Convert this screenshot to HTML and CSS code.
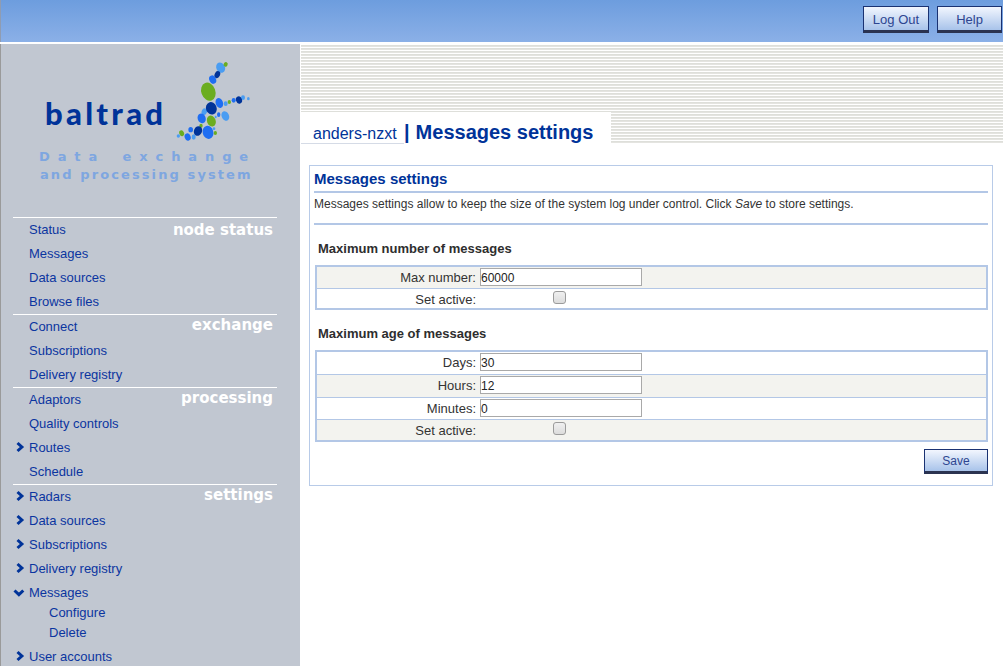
FILE: index.html
```html
<!DOCTYPE html>
<html lang="en">
<head>
<meta charset="utf-8">
<title>Messages settings</title>
<link rel="stylesheet" href="styles.css">
</head>
<body>
<header class="topbar">
  <button class="btn btn-wide" type="button">Log Out</button>
  <button class="btn" type="button">Help</button>
</header>
<div class="page">
  <aside class="sidebar">
    <div class="logo">
      <div class="logo-top">
        <span class="logo-word">baltrad</span>
        <svg class="logo-mark" width="90" height="90" viewBox="0 0 270 270" aria-hidden="true">
          <g class="dot-light">
            <ellipse cx="152" cy="38" rx="13" ry="16" transform="rotate(-25 152 38)"/>
            <ellipse cx="167" cy="146" rx="6" ry="7"/>
            <ellipse cx="219" cy="128" rx="6" ry="7"/>
            <ellipse cx="235" cy="131" rx="4" ry="5"/>
            <ellipse cx="103" cy="170" rx="8" ry="10" transform="rotate(25 103 170)"/>
            <ellipse cx="166" cy="183" rx="11" ry="15" transform="rotate(-25 166 183)"/>
            <ellipse cx="137" cy="186" rx="3" ry="4"/>
            <ellipse cx="132" cy="221" rx="4" ry="4"/>
            <ellipse cx="71" cy="246" rx="6" ry="8"/>
            <ellipse cx="25" cy="243" rx="5" ry="5"/>
          </g>
          <g class="dot-green">
            <ellipse cx="167" cy="28" rx="6" ry="7" transform="rotate(25 167 28)"/>
            <ellipse cx="115" cy="110" rx="21" ry="28" transform="rotate(-20 115 110)"/>
            <ellipse cx="178" cy="141" rx="5" ry="6"/>
            <ellipse cx="124" cy="198" rx="13" ry="17" transform="rotate(-20 124 198)"/>
            <ellipse cx="93" cy="212" rx="5" ry="6"/>
            <ellipse cx="136" cy="234" rx="5" ry="6"/>
            <ellipse cx="35" cy="235" rx="7" ry="9" transform="rotate(-25 35 235)"/>
          </g>
          <g class="dot-navy">
            <ellipse cx="142" cy="59" rx="8" ry="11" transform="rotate(25 142 59)"/>
            <ellipse cx="207" cy="135" rx="9" ry="11" transform="rotate(-20 207 135)"/>
            <ellipse cx="124" cy="160" rx="16" ry="19" transform="rotate(-20 124 160)"/>
            <ellipse cx="84" cy="228" rx="12" ry="15" transform="rotate(25 84 228)"/>
          </g>
          <g class="dot-blue">
            <ellipse cx="128" cy="74" rx="10" ry="13" transform="rotate(-25 128 74)"/>
            <ellipse cx="148" cy="144" rx="11" ry="15" transform="rotate(-20 148 144)"/>
            <ellipse cx="191" cy="136" rx="6" ry="7"/>
            <ellipse cx="95" cy="190" rx="12" ry="15" transform="rotate(-20 95 190)"/>
            <ellipse cx="146" cy="179" rx="5" ry="7"/>
            <ellipse cx="114" cy="232" rx="16" ry="20" transform="rotate(-15 114 232)"/>
            <ellipse cx="62" cy="224" rx="7" ry="8"/>
            <ellipse cx="53" cy="246" rx="9" ry="11" transform="rotate(-20 53 246)"/>
          </g>
        </svg>
      </div>
      <div class="logo-tag logo-tag-wide">Data exchange</div>
      <div class="logo-tag">and processing system</div>
    </div>

    <nav class="nav">
      <section class="nav-group">
        <h2 class="nav-label nav-label-first">node status</h2>
        <a class="nav-item" href="#">Status</a>
        <a class="nav-item" href="#">Messages</a>
        <a class="nav-item" href="#">Data sources</a>
        <a class="nav-item" href="#">Browse files</a>
      </section>
      <section class="nav-group">
        <h2 class="nav-label">exchange</h2>
        <a class="nav-item" href="#">Connect</a>
        <a class="nav-item" href="#">Subscriptions</a>
        <a class="nav-item" href="#">Delivery registry</a>
      </section>
      <section class="nav-group">
        <h2 class="nav-label">processing</h2>
        <a class="nav-item" href="#">Adaptors</a>
        <a class="nav-item" href="#">Quality controls</a>
        <a class="nav-item" href="#"><svg class="chev" width="12" height="12" viewBox="0 0 12 12"><path d="M4.500 2l4.400 4-4.400 4"/></svg>Routes</a>
        <a class="nav-item" href="#">Schedule</a>
      </section>
      <section class="nav-group">
        <h2 class="nav-label">settings</h2>
        <a class="nav-item" href="#"><svg class="chev" width="12" height="12" viewBox="0 0 12 12"><path d="M4.500 2l4.400 4-4.400 4"/></svg>Radars</a>
        <a class="nav-item" href="#"><svg class="chev" width="12" height="12" viewBox="0 0 12 12"><path d="M4.500 2l4.400 4-4.400 4"/></svg>Data sources</a>
        <a class="nav-item" href="#"><svg class="chev" width="12" height="12" viewBox="0 0 12 12"><path d="M4.500 2l4.400 4-4.400 4"/></svg>Subscriptions</a>
        <a class="nav-item" href="#"><svg class="chev" width="12" height="12" viewBox="0 0 12 12"><path d="M4.500 2l4.400 4-4.400 4"/></svg>Delivery registry</a>
        <a class="nav-item nav-item-open" href="#"><svg class="chev" width="12" height="12" viewBox="0 0 12 12"><path d="M1.500 3.500l4.400 4.200 4.400-4.200"/></svg>Messages</a>
        <a class="nav-sub" href="#">Configure</a>
        <a class="nav-sub" href="#">Delete</a>
        <a class="nav-item nav-item-after" href="#"><svg class="chev" width="12" height="12" viewBox="0 0 12 12"><path d="M4.500 2l4.400 4-4.400 4"/></svg>User accounts</a>
      </section>
    </nav>
  </aside>

  <main class="main">
    <div class="banner">
      <div class="title-tab">
        <span class="node-name">anders-nzxt</span>
        <span class="title-sep">|</span>
        <h1 class="title">Messages settings</h1>
      </div>
    </div>

    <section class="panel">
      <h2 class="panel-title">Messages settings</h2>
      <p class="panel-intro">Messages settings allow to keep the size of the system log under control. Click <em>Save</em> to store settings.</p>

      <h3 class="group-title group-title-first">Maximum number of messages</h3>
      <div class="form-table form-table-number">
        <div class="row row-odd row-short">
          <label class="row-label">Max number:</label>
          <div class="row-field"><input class="text-input" type="text" value="60000"></div>
        </div>
        <div class="row row-check">
          <label class="row-label">Set active:</label>
          <div class="row-field"><input class="check" type="checkbox"></div>
        </div>
      </div>

      <h3 class="group-title">Maximum age of messages</h3>
      <div class="form-table form-table-age">
        <div class="row">
          <label class="row-label">Days:</label>
          <div class="row-field"><input class="text-input" type="text" value="30"></div>
        </div>
        <div class="row row-odd">
          <label class="row-label">Hours:</label>
          <div class="row-field"><input class="text-input" type="text" value="12"></div>
        </div>
        <div class="row row-short">
          <label class="row-label">Minutes:</label>
          <div class="row-field"><input class="text-input" type="text" value="0"></div>
        </div>
        <div class="row row-odd row-check">
          <label class="row-label">Set active:</label>
          <div class="row-field"><input class="check" type="checkbox"></div>
        </div>
      </div>

      <div class="panel-actions">
        <button class="btn btn-save" type="button">Save</button>
      </div>
    </section>
  </main>
</div>
</body>
</html>
```
FILE: styles.css
```css
* { box-sizing: border-box; }
html, body { height: 100%; }
body {
  margin: 0;
  overflow: hidden;
  background: #fff;
  font-family: "Liberation Sans", Arial, sans-serif;
  font-size: 13px;
  color: #333;
}

.topbar {
  height: 42px;
  padding: 6px 1px 0 0;
  display: flex;
  justify-content: flex-end;
  align-items: flex-start;
  gap: 8px;
  border-left: 1px solid #8f9cb2;
  background: linear-gradient(#6d9dde, #8bb0e7);
}
.btn {
  width: 65px;
  height: 27px;
  padding: 1px 0 0;
  border: 1px solid #1a3272;
  border-bottom: 3px solid #2b3350;
  border-radius: 0;
  background: linear-gradient(#f2f6fe, #a8c3ea);
  color: #2d4590;
  font: 13px "Liberation Sans", Arial, sans-serif;
}
.btn-wide { width: 66px; }

.page {
  display: flex;
  height: 624px;
  margin-top: 2px;
}
.sidebar {
  width: 300px;
  flex: none;
  height: 100%;
  overflow: hidden;
  border-left: 1px solid #9a9a9a;
  background: #c1c7d1;
}
.logo { height: 173px; position: relative; }
.logo-top {
  position: relative;
  height: 103px;
}
.logo-word {
  position: absolute;
  left: 44px;
  top: 50px;
  font: 900 31px "Lato", sans-serif;
  letter-spacing: 3.3px;
  color: #003399;
}
.logo-mark { position: absolute; left: 169px; top: 11px; }
.dot-light { fill: #4a9df2; }
.dot-green { fill: #6bad20; }
.dot-navy { fill: #003399; }
.dot-blue { fill: #1f6ef2; }
.logo-tag {
  padding-left: 39px;
  height: 18px;
  font: 700 13px/18px "DejaVu Sans", sans-serif;
  letter-spacing: 2.1px;
  color: #7ea6e0;
  white-space: nowrap;
}
.logo-tag-wide {
  margin-top: 1px;
  padding-left: 38px;
  letter-spacing: 7.9px;
  word-spacing: 5px;
}

.nav-group {
  position: relative;
  width: 264px;
  margin-left: 12px;
  border-top: 1px solid #fff;
}
.nav-label {
  position: absolute;
  top: 0;
  right: 4px;
  margin: 0;
  font: 700 15px/20px "DejaVu Sans", sans-serif;
  color: #fff;
}
.nav-label-first { top: 2px; }
.nav-item, .nav-sub {
  display: flex;
  align-items: center;
  color: #0b35a0;
  text-decoration: none;
  font-size: 13px;
}
.nav-item { height: 24px; padding: 0 0 2px 16px; position: relative; }
.nav-item-open { height: 21px; padding: 2px 0 0 16px; }
.nav-item-after { margin-top: 3px; }
.nav-sub { height: 20px; padding-left: 36px; }
.chev {
  position: absolute;
  left: 0;
  top: 5px;
  fill: none;
  stroke: #003399;
  stroke-width: 3;
}
.nav-item-open .chev { top: 6px; }

.main { flex: 1; margin-left: 1px; min-width: 0; }
.banner {
  height: 99px;
  padding-top: 68px;
  background: repeating-linear-gradient(#fff 0 1px, #dedfda 1px 2px, #e4e4e0 2px 3px);
}
.title-tab {
  display: flex;
  align-items: baseline;
  width: 310px;
  height: 31px;
  background: #fff;
  color: #003399;
}
.node-name {
  width: 103px;
  height: 32px;
  padding: 12px 0 0 12px;
  border-bottom: 1px solid #d5dbe6;
  font-size: 16px;
  line-height: 20px;
}
.title-sep { font: 700 20px/24px "Liberation Sans", sans-serif; }
.title { margin: 0 0 0 6px; font: 700 20px/24px "Liberation Sans", sans-serif; }

.panel {
  width: 684px;
  height: 321px;
  margin: 22px 0 0 8px;
  padding: 4px 4px 0;
  border: 1px solid #b8cbe8;
}
.panel-title {
  margin: 0;
  height: 23px;
  border-bottom: 2px solid #b3c7e6;
  font-size: 15px;
  line-height: 18px;
  color: #003399;
}
.panel-intro {
  margin: 0;
  height: 32px;
  border-bottom: 2px solid #b3c7e6;
  font-size: 12px;
  line-height: 22px;
}
.group-title {
  margin: 0;
  padding: 2px 0 0 4px;
  height: 26px;
  font-size: 13px;
  line-height: 16px;
  color: #2e2e2e;
}
.group-title-first { height: 40px; padding-top: 16px; }
.form-table {
  margin-left: 1px;
  border: 2px solid #b3c7e6;
  width: 673px;
}
.form-table-number { margin-bottom: 14px; }
.row {
  display: grid;
  grid-template-columns: 161px 166px 1fr;
  height: 22px;
  font-size: 13px;
}
.row + .row { border-top: 1px solid #b3c7e6; height: 23px; }
.form-table-number .row-short { height: 21px; }
.form-table-number .row-check { height: 20px; }
.form-table-age .row-short { height: 22px; }
.form-table-age .row-check { height: 21px; }
.row-odd { background: #f3f3ef; }
.row-label {
  padding: 3px 2px 0 0;
  text-align: right;
  line-height: 16px;
  color: #333;
}
.row-field { padding: 1px 2px; display: flex; justify-content: center; align-items: flex-start; }
.text-input {
  width: 162px;
  height: 18px;
  padding: 1px 0 0;
  border: 1px solid #a9a9a9;
  border-radius: 0;
  background: #fff;
  font: 12px "Liberation Sans", sans-serif;
  color: #222;
  outline: 0;
}
.check {
  appearance: none;
  width: 13px;
  height: 13px;
  margin: 1px 4px 0 0;
  border: 1px solid #9b9b9b;
  border-radius: 3px;
  background: linear-gradient(#f0f0f0, #dcdcdc);
}
.panel-actions { display: flex; justify-content: flex-end; margin-top: 7px; width: 674px; }
.btn-save { width: 64px; height: 25px; font-size: 12px; }
```
